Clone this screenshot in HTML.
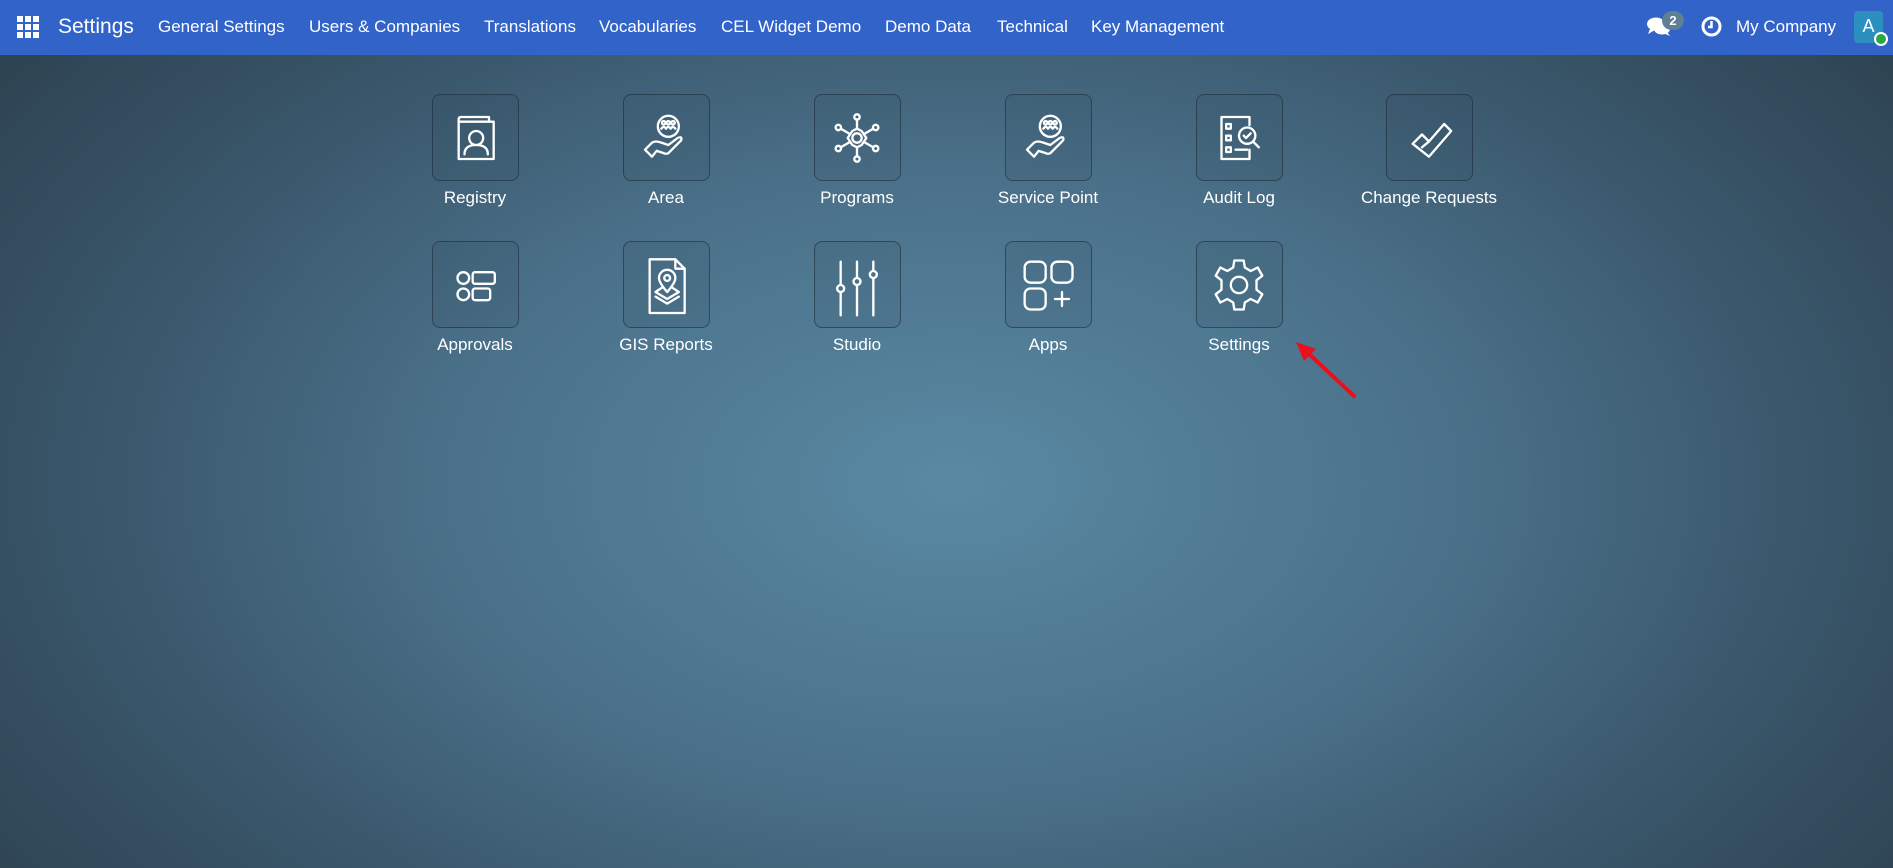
<!DOCTYPE html>
<html><head><meta charset="utf-8"><style>
*{margin:0;padding:0;box-sizing:border-box}
body{width:1893px;height:868px;overflow:hidden;font-family:"Liberation Sans",sans-serif;
background:radial-gradient(ellipse 1150px 700px at 953px 483px,#5a89a3 0%,#4a7089 45%,#39566a 75%,#2f4554 100%);position:relative}
.nav{position:absolute;left:0;top:0;width:1893px;height:55px;background:#3163c9;color:#fff}
.nav span{position:absolute;top:17px;font-size:17px;white-space:nowrap}
.app{position:absolute;width:150px;text-align:center;color:#fff;font-size:17px}
.box{width:87px;height:87px;margin:0 auto;border:1.5px solid rgba(25,40,52,.55);border-radius:8px;background:rgba(40,65,80,.12);display:flex;align-items:center;justify-content:center}
.box svg{width:70px;height:70px;fill:none;stroke:#fff;stroke-width:2;stroke-linecap:round;stroke-linejoin:round}
.lbl{margin-top:7px}
</style></head><body>
<div class="nav">
<svg style="position:absolute;left:17px;top:16px" width="22" height="22" fill="#fff"><rect x="0" y="0" width="6" height="6"/><rect x="8" y="0" width="6" height="6"/><rect x="16" y="0" width="6" height="6"/><rect x="0" y="8" width="6" height="6"/><rect x="8" y="8" width="6" height="6"/><rect x="16" y="8" width="6" height="6"/><rect x="0" y="16" width="6" height="6"/><rect x="8" y="16" width="6" height="6"/><rect x="16" y="16" width="6" height="6"/></svg>
<span style="left:58px;top:15px;font-size:21px">Settings</span>
<span style="left:158px">General Settings</span>
<span style="left:309px">Users &amp; Companies</span>
<span style="left:484px">Translations</span>
<span style="left:599px">Vocabularies</span>
<span style="left:721px">CEL Widget Demo</span>
<span style="left:885px">Demo Data</span>
<span style="left:997px">Technical</span>
<span style="left:1091px">Key Management</span>
<svg style="position:absolute;left:1647px;top:17px" width="24" height="20" fill="#fff"><ellipse cx="9" cy="7" rx="9" ry="6.5"/><path d="M3 12 L1 17 L8 13Z"/><ellipse cx="15" cy="12" rx="8" ry="5.5"/><path d="M20 15 L23 19 L16 16Z"/></svg>
<div style="position:absolute;left:1662px;top:11px;width:22px;height:19px;border-radius:10px;background:#5f7f95;color:#fff;font-size:13px;font-weight:bold;text-align:center;line-height:19px">2</div>
<svg style="position:absolute;left:1701px;top:16px" width="21" height="21" fill="none" stroke="#fff" stroke-width="3"><circle cx="10.5" cy="10.5" r="8.5"/><path d="M10.5 5 V11 H7" stroke-width="2.5"/></svg>
<span style="left:1736px">My Company</span>
<div style="position:absolute;left:1854px;top:11px;width:29px;height:32px;border-radius:4px;background:#2b8fc0;color:#fff;font-size:18px;text-align:center;line-height:30px">A</div>
<div style="position:absolute;left:1874px;top:32px;width:14px;height:14px;border-radius:50%;background:#28a745;border:2px solid #fff"></div>
</div>

<div class="app" style="left:400px;top:94px"><div class="box"><svg viewBox="0 0 60 60"><path d="M16 14 V48 H46 V16 H42 V12 H18 Q16 12 16 14Z"/><path d="M16 16 H42"/><circle cx="31" cy="30" r="6"/><path d="M21 44 Q21 36 31 36 Q41 36 41 44"/></svg></div><div class="lbl">Registry</div></div>
<div class="app" style="left:591px;top:94px"><div class="box"><svg viewBox="0 0 60 60"><circle cx="32" cy="20" r="9"/><circle cx="28" cy="17" r="1.5"/><circle cx="32" cy="17" r="1.5"/><circle cx="36" cy="17" r="1.5"/><path d="M26 22 Q28 19 30 22 M30 22 Q32 19 34 22 M34 22 Q36 19 38 22"/><path d="M12 40 L18 34 Q21 32 26 34 L32 36 L40 30 Q44 28 43 32 L32 43 Q30 44 28 43 L22 41 L18 46Z"/></svg></div><div class="lbl">Area</div></div>
<div class="app" style="left:782px;top:94px"><div class="box"><svg viewBox="0 0 60 60"><circle cx="30" cy="30" r="4"/><path d="M30 22 L34 24 L38 30 L34 36 L30 38 L26 36 L22 30 L26 24Z"/><path d="M30 22 V14 M30 38 V46 M23 26 L16 22 M37 26 L44 22 M23 34 L16 38 M37 34 L44 38"/><circle cx="30" cy="12" r="2.3"/><circle cx="30" cy="48" r="2.3"/><circle cx="14" cy="21" r="2.3"/><circle cx="46" cy="21" r="2.3"/><circle cx="14" cy="39" r="2.3"/><circle cx="46" cy="39" r="2.3"/></svg></div><div class="lbl">Programs</div></div>
<div class="app" style="left:973px;top:94px"><div class="box"><svg viewBox="0 0 60 60"><circle cx="32" cy="20" r="9"/><circle cx="28" cy="17" r="1.5"/><circle cx="32" cy="17" r="1.5"/><circle cx="36" cy="17" r="1.5"/><path d="M26 22 Q28 19 30 22 M30 22 Q32 19 34 22 M34 22 Q36 19 38 22"/><path d="M12 40 L18 34 Q21 32 26 34 L32 36 L40 30 Q44 28 43 32 L32 43 Q30 44 28 43 L22 41 L18 46Z"/></svg></div><div class="lbl">Service Point</div></div>
<div class="app" style="left:1164px;top:94px"><div class="box"><svg viewBox="0 0 60 60"><path d="M39 40 V48 H15 V12 H39 V19"/><rect x="19" y="18" width="4" height="4"/><rect x="19" y="28" width="4" height="4"/><rect x="19" y="38" width="4" height="4"/><path d="M27 40 H37"/><circle cx="37" cy="28" r="7"/><path d="M34 28 L36 30 L40 26 M42 33 L47 38"/></svg></div><div class="lbl">Audit Log</div></div>
<div class="app" style="left:1354px;top:94px"><div class="box"><svg viewBox="0 0 60 60"><path d="M16 35 L24 27 L30 33 L43 18 L49 24 L30 46Z"/><path d="M24 38 L30 33"/></svg></div><div class="lbl">Change Requests</div></div>

<div class="app" style="left:400px;top:241px"><div class="box"><svg viewBox="0 0 60 60"><circle cx="20" cy="24" r="5"/><circle cx="20" cy="38" r="5"/><rect x="28" y="19" width="19" height="10" rx="2"/><rect x="28" y="33" width="15" height="10" rx="2"/></svg></div><div class="lbl">Approvals</div></div>
<div class="app" style="left:591px;top:241px"><div class="box"><svg viewBox="0 0 60 60"><path d="M16 8 H38 L46 16 V54 H16Z"/><path d="M38 8 V16 H46"/><path d="M31 36 Q24 28 24 24 A7 7 0 0 1 38 24 Q38 28 31 36Z"/><circle cx="31" cy="24" r="2.5"/><path d="M27 32 L21 36 L31 42 L41 36 L35 32 M21 40 L31 46 L41 40"/></svg></div><div class="lbl">GIS Reports</div></div>
<div class="app" style="left:782px;top:241px"><div class="box"><svg viewBox="0 0 60 60"><path d="M16 10 V30 M16 36 V56 M30 10 V24 M30 30 V56 M44 10 V18 M44 24 V56"/><circle cx="16" cy="33" r="3"/><circle cx="30" cy="27" r="3"/><circle cx="44" cy="21" r="3"/></svg></div><div class="lbl">Studio</div></div>
<div class="app" style="left:973px;top:241px"><div class="box"><svg viewBox="0 0 60 60"><rect x="10" y="10" width="18" height="18" rx="5"/><rect x="33" y="10" width="18" height="18" rx="5"/><rect x="10" y="33" width="18" height="18" rx="5"/><path d="M42 36 V48 M36 42 H48"/></svg></div><div class="lbl">Apps</div></div>
<div class="app" style="left:1164px;top:241px"><div class="box"><svg viewBox="0 0 60 60"><circle cx="30" cy="30" r="7"/><path d="M26 9 H34 L35 15 L40 18 L46 15 L50 22 L45 26 V34 L50 38 L46 45 L40 42 L35 45 L34 51 H26 L25 45 L20 42 L14 45 L10 38 L15 34 V26 L10 22 L14 15 L20 18 L25 15Z"/></svg></div><div class="lbl">Settings</div></div>

<svg style="position:absolute;left:0;top:0" width="1893" height="868"><path d="M1354 396 L1308 353" stroke="#e8101a" stroke-width="4" stroke-linecap="round"/><path d="M1296 342 L1316 349 L1304 361Z" fill="#e8101a"/></svg>
</body></html>
